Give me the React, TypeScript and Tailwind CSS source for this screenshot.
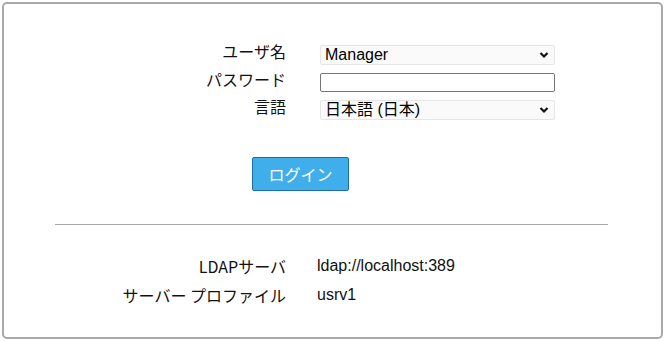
const jp = "font-['Noto_Sans_CJK_JP','Noto_Sans',sans-serif]";
const ar = "font-['Liberation_Sans','Noto_Sans_CJK_JP',sans-serif]";

function Chevron() {
  return (
    <svg width="10" height="7" viewBox="0 0 10 7" className="absolute right-[5px] top-1/2 -translate-y-1/2">
      <path d="M1.5 1.5 L5 5 L8.5 1.5" fill="none" stroke="#111" strokeWidth="2.2" />
    </svg>
  );
}

function Select({ value }: { value: string }) {
  return (
    <div
      className={`relative h-[20px] w-[235px] rounded-[2px] border border-[#e5e5e5] bg-[#fafafa] pl-[4px] text-[16px] leading-[18px] text-black ${ar}`}
    >
      {value}
      <Chevron />
    </div>
  );
}

export default function App() {
  const rows = [
    { label: "ユーザ名", field: <Select value="Manager" /> },
    {
      label: "パスワード",
      field: <div className="h-[19px] w-[235px] rounded-[2px] border border-[#767676] bg-white" />,
    },
    { label: "言語", field: <Select value="日本語 (日本)" /> },
  ];

  const info = [
    { label: "LDAPサーバ", value: "ldap://localhost:389" },
    { label: "サーバー プロファイル", value: "usrv1" },
  ];

  return (
    <div className="p-[2px] bg-white">
      <div className="h-[337px] w-[661px] rounded-[5px] border-2 border-[#a9a9a9] bg-white">
        <div className="flex flex-col gap-[4px] pt-[37px]">
          {rows.map((r) => (
            <div key={r.label} className="flex items-start">
              <div className={`w-[282px] text-right text-[16px] leading-[20px] text-[#111] ${jp}`}>{r.label}</div>
              <div className="ml-[34px] mt-[4px]">{r.field}</div>
            </div>
          ))}
        </div>

        <div className="mt-[37px] pl-[248px]">
          <button
            className={`h-[34px] w-[97px] rounded-[2px] border border-[#1c6ea4] bg-[#40aeea] text-[16px] text-white ${jp}`}
          >
            ログイン
          </button>
        </div>

        <div className="ml-[51px] mr-[53px] mt-[33px] h-px bg-[#a8a8a8]" />

        <div className="mt-[31px] flex flex-col gap-[9px]">
          {info.map((r) => (
            <div key={r.label} className="flex items-center">
              <div className={`w-[282px] text-right text-[16px] leading-[20px] text-[#111] ${jp}`}>{r.label}</div>
              <div className={`ml-[31px] text-[16px] leading-[20px] text-[#111] ${ar}`}>{r.value}</div>
            </div>
          ))}
        </div>
      </div>
    </div>
  );
}
